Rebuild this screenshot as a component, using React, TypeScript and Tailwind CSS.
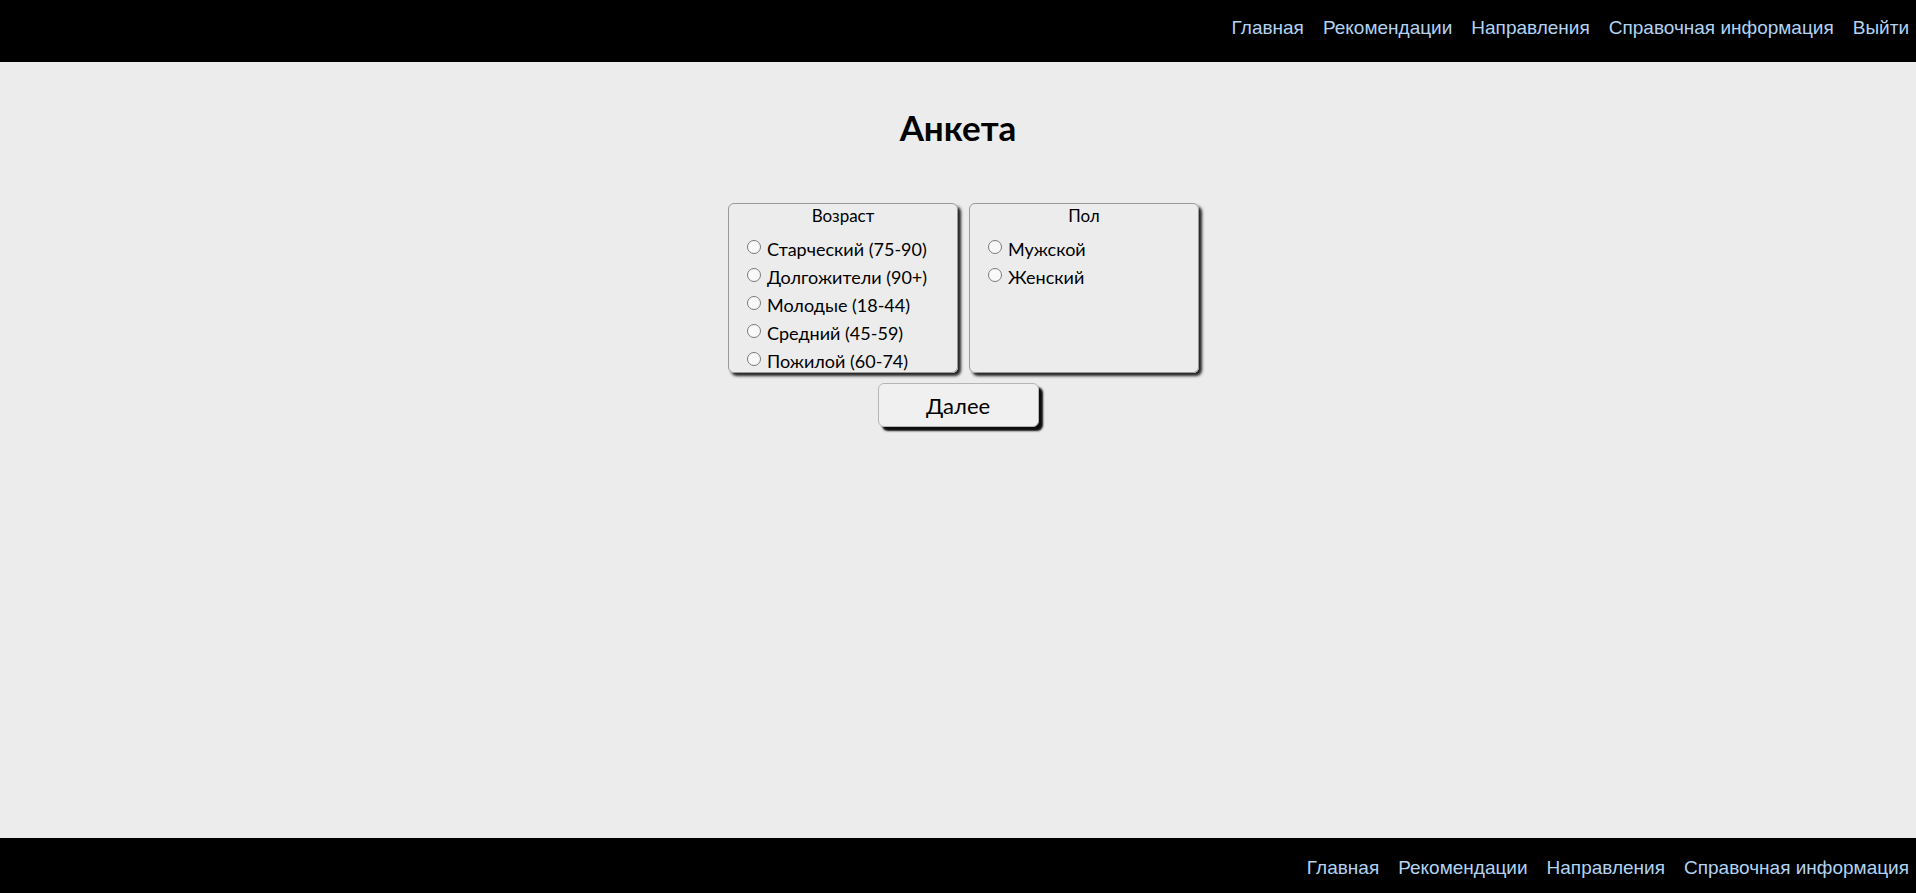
const navTop = ["Главная", "Рекомендации", "Направления", "Справочная информация", "Выйти"];
const navBottom = ["Главная", "Рекомендации", "Направления", "Справочная информация"];

const ages = [
  "Старческий (75-90)",
  "Долгожители (90+)",
  "Молодые (18-44)",
  "Средний (45-59)",
  "Пожилой (60-74)",
];
const sexes = ["Мужской", "Женский"];

const NavBar = ({ links, className }: { links: string[]; className: string }) => (
  <nav className={`flex justify-end gap-[19px] bg-black pr-[7px] ${className}`}>
    {links.map((l) => (
      <a
        key={l}
        href="#"
        className="font-['Liberation_Sans',Arial,sans-serif] text-[19px] leading-none text-[#b3d3f2] no-underline"
      >
        {l}
      </a>
    ))}
  </nav>
);

const Group = ({ title, name, options }: { title: string; name: string; options: string[] }) => (
  <fieldset className="h-[170px] w-[230px] rounded-[6px] border border-[#9a9a9a] bg-[#ececec] pl-[18px] pt-[1px] shadow-[3px_3px_3px_rgba(0,0,0,0.85)]">
    <div className="-ml-[18px] text-center text-[17px] leading-[22px] text-black">{title}</div>
    <div className="mt-[8px] flex flex-col">
      {options.map((o) => (
        <label key={o} className="flex h-[28px] items-center gap-[6px] text-[18px] text-black">
          <input
            type="radio"
            name={name}
            className="m-0 size-[14px] shrink-0 -translate-y-[2px] appearance-none rounded-full border border-[#7a7a7a] bg-[#f9f9f9]"
          />
          <span>{o}</span>
        </label>
      ))}
    </div>
  </fieldset>
);

export default function App() {
  return (
    <div className="flex h-[893px] w-full flex-col bg-[#ececec] font-['Lato','Noto_Sans',sans-serif]">
      <NavBar links={navTop} className="h-[62px] shrink-0 items-start pt-[18px]" />
      <main className="flex flex-1 flex-col items-center">
        <h1 className="mt-[45px] text-[35px] font-bold leading-[40px] text-black">Анкета</h1>
        <form className="mt-[56px] flex flex-col items-center">
          <div className="flex gap-[11px] pl-[11px]">
            <Group title="Возраст" name="age" options={ages} />
            <Group title="Пол" name="sex" options={sexes} />
          </div>
          <button
            type="button"
            className="mt-[10px] h-[44px] w-[161px] rounded-[6px] border border-[#b5b5b5] bg-[#f0f0f0] text-[22px] text-black shadow-[4px_4px_2px_rgba(0,0,0,0.95)]"
          >
            Далее
          </button>
        </form>
      </main>
      <NavBar links={navBottom} className="h-[55px] shrink-0 items-center pt-[3px]" />
    </div>
  );
}
